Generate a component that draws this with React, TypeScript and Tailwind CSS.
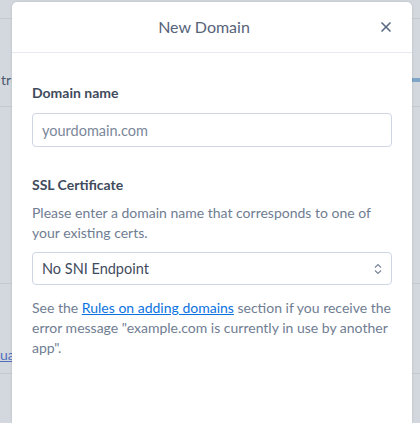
import { X } from 'lucide-react';

export default function App() {
  return (
    <div className="relative h-[423px] w-[420px] overflow-hidden bg-[#d3d7de] font-['Lato',sans-serif]">
      {/* faint page behind overlay */}
      <div className="absolute inset-0 flex flex-col">
        <div className="mt-[18px] h-px bg-[#c3c8d1]" />
        <div className="mt-[50px] flex items-center justify-between">
          <span className="pl-[1px] text-[14px] text-[#4d5a6d]">tr</span>
          <span className="h-[4px] w-[8px] bg-[#7fa6c8]" />
        </div>
        <div className="mt-[16px] h-px bg-[#c3c8d1]" />
        <div className="mt-[176px] h-px bg-[#c3c8d1]" />
        <span className="mt-[60px] text-[14px] text-[#4f6fbd] underline">ua</span>
        <div className="mt-[8px] h-px bg-[#c3c8d1]" />
      </div>

      <div className="absolute left-[12px] top-[2px] flex h-[440px] w-[400px] flex-col rounded-t-[5px] bg-white shadow-[0_0_3px_rgba(0,0,0,0.12)]">
        <div className="relative flex h-[51px] items-center justify-center border-b border-[#e6eaf0] pr-[16px]">
          <h2 className="text-[16px] text-[#56637a]">New Domain</h2>
          <button className="absolute right-[18px] top-[17px] text-[#596a84]">
            <X size={16} strokeWidth={2.5} />
          </button>
        </div>

        <div className="flex flex-col px-[20px] pt-[30px]">
          <label className="text-[14px] font-bold leading-[20px] text-[#3f4b5d]">Domain name</label>
          <input
            placeholder="yourdomain.com"
            className="mt-[10px] h-[34px] rounded-[4px] border border-[#cfd6e3] px-[9px] text-[14.5px] text-[#3f4b5d] placeholder:text-[#7b879a] outline-none"
          />

          <label className="mt-[28px] text-[14px] font-bold leading-[20px] text-[#3f4b5d]">SSL Certificate</label>
          <p className="mt-[8px] text-[14px] leading-[20px] text-[#6f7d92]">
            Please enter a domain name that corresponds to one of your existing certs.
          </p>
          <div className="mt-[9px] flex h-[33px] items-center justify-between rounded-[4px] border border-[#cfd6e3] px-[9px]">
            <span className="text-[14.5px] text-[#3f4b5d]">No SNI Endpoint</span>
            <svg width="8" height="12" viewBox="0 0 8 12" fill="none" stroke="#7b879a" strokeWidth="1.2">
              <path d="M1 4.5 L4 1.5 L7 4.5" />
              <path d="M1 7.5 L4 10.5 L7 7.5" />
            </svg>
          </div>

          <p className="mt-[13px] text-[14px] leading-[20px] text-[#6f7d92]">
            See the{' '}
            <a href="#" className="text-[#0b72e0] underline">Rules on adding domains</a>{' '}
            section if you receive the error message "example.com is currently in use by another app".
          </p>
        </div>
      </div>
    </div>
  );
}
